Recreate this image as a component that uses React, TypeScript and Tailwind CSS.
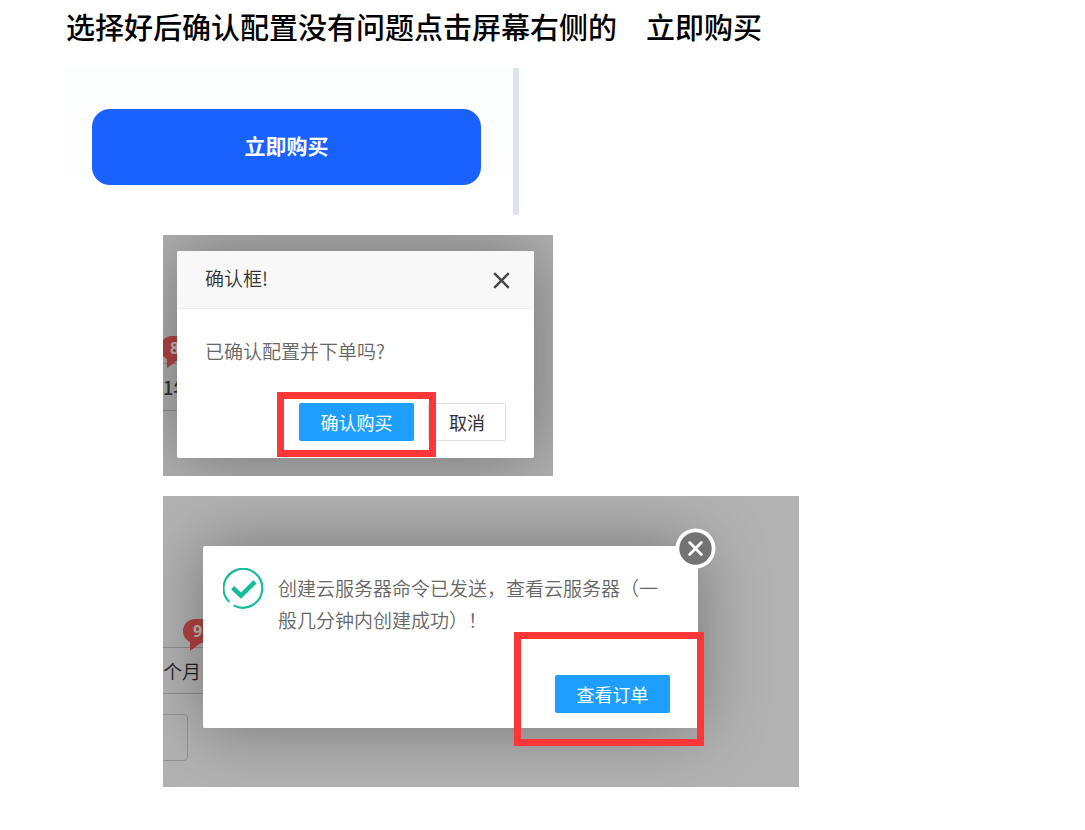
import React from "react";

interface PriceBadgeProps {
    label: string;
    className?: string;
}

const PriceBadge: React.FC<PriceBadgeProps> = ({ label, className }) => {
    return (
        <div className={`absolute w-16 ${className}`}>
            <div className="h-6 rounded-full bg-[#b54343] pl-2.5 font-['Open_Sans',sans-serif] text-base leading-6 font-bold text-[#c4bcbc]">
                {label}
            </div>
            <svg width="12" height="9" viewBox="0 0 12 9" className="ml-[7px] -mt-px">
                <path d="M0 0H12L0 9Z" fill="#b54343" />
            </svg>
        </div>
    );
};

interface PrimaryButtonProps {
    children: React.ReactNode;
}

const PrimaryButton: React.FC<PrimaryButtonProps> = ({ children }) => {
    return (
        <button className="block h-[38px] w-[115px] cursor-pointer rounded-xs bg-[#1e9fff] text-lg leading-none text-white">
            {children}
        </button>
    );
};

const BuyPanel: React.FC = () => {
    return (
        <section className="w-full max-w-[455px] border-r-6 border-[#dde3f0] bg-linear-to-b from-[#fcfdfd] to-white pt-[41px] pr-8 pb-[30px] pl-7">
            <button className="h-[76px] w-full cursor-pointer rounded-[18px] bg-[#1a62ff] pb-0.5 text-[21px] font-bold text-white">
                立即购买
            </button>
        </section>
    );
};

const ConfirmScene: React.FC = () => {
    return (
        <section className="relative w-full max-w-[390px] overflow-hidden bg-[#b0b0b0] pt-4 pr-[19px] pb-[18px] pl-3.5">
            {/* page behind the dialog */}
            <div className="absolute top-32 left-0 h-12 w-20 border-y border-[#8d8d8d]">
                <span className="block text-lg leading-[46px] font-medium whitespace-nowrap text-[#333]">
                    1年
                </span>
            </div>
            <PriceBadge label="8" className="top-[101px] -left-[3px]" />

            <div
                role="dialog"
                aria-labelledby="confirm-title"
                className="relative rounded-xs bg-white shadow-[0_0_68px_rgba(0,0,0,0.35)]"
            >
                <div className="flex h-[58px] items-center justify-between rounded-t-xs border-b border-[#eee] bg-[#f8f8f8] pr-6 pl-7">
                    <h2
                        id="confirm-title"
                        className="pb-0.5 text-[19px] font-[350] text-[#333]"
                    >
                        确认框!
                    </h2>
                    <button aria-label="关闭" className="mt-0.5 cursor-pointer">
                        <svg width="17" height="17" viewBox="0 0 17 17">
                            <path
                                d="M1.2 1.2L15.8 15.8M15.8 1.2L1.2 15.8"
                                stroke="#46454c"
                                strokeWidth="2.4"
                            />
                        </svg>
                    </button>
                </div>
                <p className="px-7 pt-[26px] pb-9 text-[19px] leading-8 font-[350] text-[#666]">
                    已确认配置并下单吗?
                </p>
                <div className="flex justify-end gap-3.5 pr-7 pb-[17px]">
                    <div className="relative">
                        <PrimaryButton>确认购买</PrimaryButton>
                        <div className="pointer-events-none absolute -top-[11px] -right-[22px] -bottom-4 -left-[22px] z-10 border-7 border-[#fd3737]" />
                    </div>
                    <button className="h-[38px] w-[78px] cursor-pointer rounded-xs border border-[#dedede] text-lg leading-none text-[#333]">
                        取消
                    </button>
                </div>
            </div>
        </section>
    );
};

const SuccessScene: React.FC = () => {
    return (
        <section className="relative w-full max-w-[636px] overflow-hidden bg-[#b2b2b2] pt-[50px] pr-[101px] pb-[59px] pl-10">
            {/* page behind the dialog */}
            <div className="absolute top-[151px] left-0 h-[47px] w-20 border-y border-[#8d8d8d]">
                <span className="block text-[19px] leading-[46px] font-[350] text-[#222]">
                    个月
                </span>
            </div>
            <div className="absolute top-[218px] -left-2 h-[47px] w-[33px] rounded-sm border border-[#929292]" />
            <PriceBadge label="9" className="top-[123px] left-5" />

            <div
                role="dialog"
                aria-label="创建成功"
                className="relative rounded-xs bg-white pt-[22px] pr-7 pb-[15px] pl-5 shadow-[0_0_68px_rgba(0,0,0,0.35)]"
            >
                <button
                    aria-label="关闭"
                    className="absolute -top-[18px] -right-[18px] cursor-pointer"
                >
                    <svg width="41" height="41" viewBox="0 0 41 41">
                        <circle cx="20.5" cy="20.5" r="20" fill="#fff" />
                        <circle cx="20.5" cy="20.5" r="16.2" fill="#737373" />
                        <path
                            d="M14.6 14.6L26.4 26.4M26.4 14.6L14.6 26.4"
                            stroke="#fff"
                            strokeWidth="2.8"
                            strokeLinecap="round"
                        />
                    </svg>
                </button>
                <div className="flex gap-3.5">
                    <svg
                        width="41"
                        height="41"
                        viewBox="0 0 41 41"
                        fill="none"
                        stroke="#12bd9c"
                        className="shrink-0"
                    >
                        <path
                            d="M6.2 34A19.4 19.4 0 1 1 10.8 37.4"
                            strokeWidth="2.2"
                        />
                        <path d="M9.6 19.6L18 27.6L32 13.8" strokeWidth="4.6" />
                    </svg>
                    <p className="pt-1 text-[19px] leading-8 font-[350] text-[#666]">
                        创建云服务器命令已发送，查看云服务器（一般几分钟内创建成功）！
                    </p>
                </div>
                <div className="mt-[39px] flex justify-end">
                    <div className="relative">
                        <PrimaryButton>查看订单</PrimaryButton>
                        <div className="pointer-events-none absolute -top-[43px] -right-[34px] -bottom-[33px] -left-[41px] border-7 border-[#fd3737]" />
                    </div>
                </div>
            </div>
        </section>
    );
};

const App: React.FC = () => {
    return (
        <main className="min-h-screen bg-white px-16 pt-1.5 pb-10 font-['Noto_Sans_CJK_SC',sans-serif]">
            <h1 className="pl-0.5 text-[29px] leading-10 font-medium text-black">
                选择好后确认配置没有问题点击屏幕右侧的　立即购买
            </h1>
            <div className="mt-[22px] flex flex-col gap-5">
                <BuyPanel />
                <div className="flex flex-col gap-5 pl-[99px]">
                    <ConfirmScene />
                    <SuccessScene />
                </div>
            </div>
        </main>
    );
};

export default App;
